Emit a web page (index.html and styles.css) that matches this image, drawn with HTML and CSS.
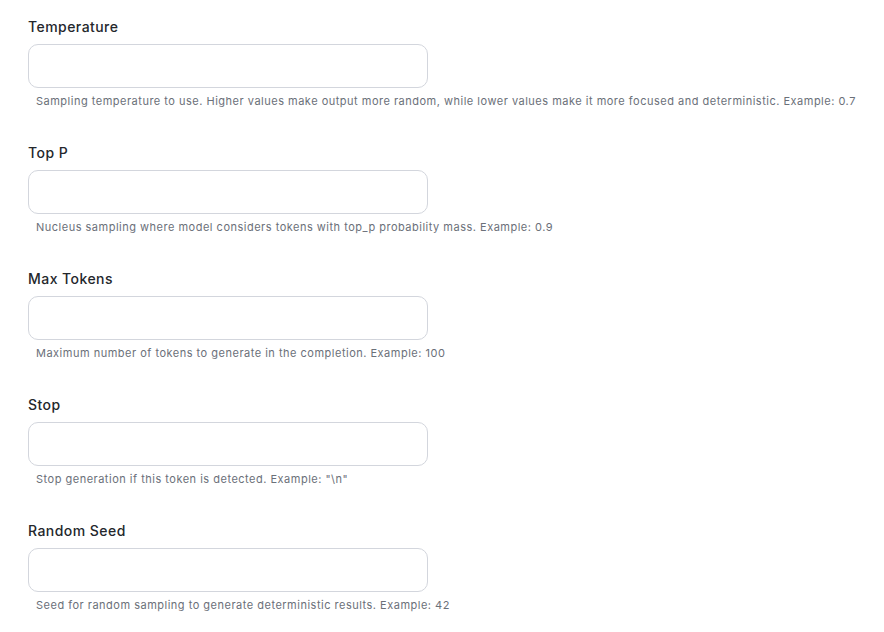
FILE: index.html
```html
<!DOCTYPE html>
<html lang="en">
<head>
<meta charset="utf-8">
<title>Model parameters</title>
<link rel="stylesheet" href="styles.css">
</head>
<body>
<form class="params">
  <div class="field">
    <label class="label" for="temperature">Temperature</label>
    <input class="input" id="temperature" type="text">
    <p class="help">Sampling temperature to use. Higher values make output more random, while lower values make it more focused and deterministic. Example: 0.7</p>
  </div>
  <div class="field">
    <label class="label" for="top_p">Top P</label>
    <input class="input" id="top_p" type="text">
    <p class="help">Nucleus sampling where model considers tokens with top_p probability mass. Example: 0.9</p>
  </div>
  <div class="field">
    <label class="label" for="max_tokens">Max Tokens</label>
    <input class="input" id="max_tokens" type="text">
    <p class="help">Maximum number of tokens to generate in the completion. Example: 100</p>
  </div>
  <div class="field">
    <label class="label" for="stop">Stop</label>
    <input class="input" id="stop" type="text">
    <p class="help">Stop generation if this token is detected. Example: "\n"</p>
  </div>
  <div class="field">
    <label class="label" for="seed">Random Seed</label>
    <input class="input" id="seed" type="text">
    <p class="help">Seed for random sampling to generate deterministic results. Example: 42</p>
  </div>
</form>
</body>
</html>
```
FILE: styles.css
```css
html, body {
  margin: 0;
  padding: 0;
  background: #ffffff;
}
body {
  font-family: Inter, "Noto Sans", sans-serif;
  color: #1f2328;
}
.params {
  display: flex;
  flex-direction: column;
  gap: 34px;
  padding: 17px 28px 0 28px;
}
.field {
  display: flex;
  flex-direction: column;
  align-items: flex-start;
}
.label {
  font-size: 14px;
  line-height: 20px;
  font-weight: 500;
  letter-spacing: 0.45px;
  color: #24272c;
  margin-bottom: 7px;
}
.input {
  box-sizing: border-box;
  width: 400px;
  height: 44px;
  border: 1px solid #d3d6dd;
  border-radius: 10px;
  background: #ffffff;
  padding: 0 12px;
  font: inherit;
  outline: none;
}
.help {
  margin: 5px 0 0 8px;
  font-size: 11px;
  line-height: 16px;
  letter-spacing: 0.5px;
  color: #6b7079;
  white-space: nowrap;
}
```
